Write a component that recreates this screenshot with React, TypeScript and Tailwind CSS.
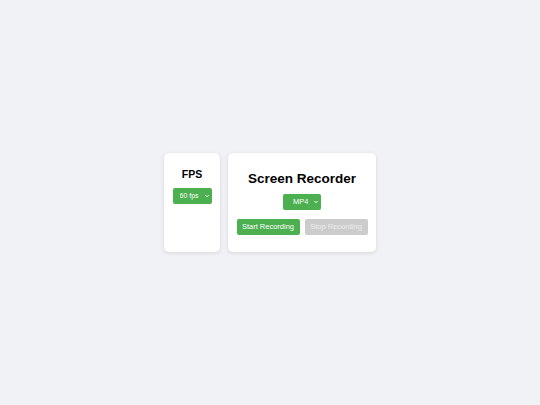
import { useState } from 'react';

function Chevron() {
  return (
    <svg
      className="pointer-events-none absolute right-[2px] top-[5px]"
      width="6"
      height="6"
      viewBox="0 0 12 12"
      fill="none"
      stroke="currentColor"
      strokeWidth="2"
      strokeLinecap="round"
      strokeLinejoin="round"
    >
      <polyline points="3,4.5 6,7.5 9,4.5" />
    </svg>
  );
}

export default function App() {
  const [fps, setFps] = useState('60');
  const [format, setFormat] = useState('mp4');
  const [recording, setRecording] = useState(false);

  return (
    <div
      className="flex min-h-screen items-center justify-center bg-[#f0f2f5]"
      style={{ fontFamily: '"Liberation Sans", Arial, sans-serif' }}
    >
      <div className="flex items-stretch gap-[8px]">
        {/* FPS card */}
        <div className="flex w-[56px] flex-col items-center rounded-[5px] bg-white pt-[15px] pb-[14px] shadow-[0_1px_4px_rgba(0,0,0,0.12)]">
          <h3 className="text-[10.5px] leading-[12px] font-bold text-black">FPS</h3>
          <div className="relative mt-[8px] flex text-white">
            <select
              value={fps}
              onChange={(e) => setFps(e.target.value)}
              className="block h-[16px] w-[39px] appearance-none rounded-[2px] bg-[#4caf50] pl-[7px] text-[7px] leading-[16px] text-white outline-none"
            >
              <option value="30">30 fps</option>
              <option value="60">60 fps</option>
            </select>
            <Chevron />
          </div>
        </div>

        {/* Recorder card */}
        <div className="flex h-[99px] w-[148px] flex-col items-center justify-center rounded-[5px] bg-white px-[9px] shadow-[0_1px_4px_rgba(0,0,0,0.12)]">
          <h2 className="text-[13.5px] leading-[16px] font-bold text-black">Screen Recorder</h2>
          <div className="relative mt-[7px] flex text-white">
            <select
              value={format}
              onChange={(e) => setFormat(e.target.value)}
              className="block h-[16px] w-[38px] appearance-none rounded-[2px] bg-[#4caf50] pl-[10px] text-[7.5px] leading-[16px] text-white outline-none"
            >
              <option value="mp4">MP4</option>
              <option value="webm">WEBM</option>
            </select>
            <Chevron />
          </div>
          <div className="mt-[9px] flex gap-[5px]">
            <button
              onClick={() => setRecording(true)}
              disabled={recording}
              className="h-[16px] w-[63px] rounded-[2px] bg-[#4caf50] text-[7.5px] text-white"
            >
              Start Recording
            </button>
            <button
              onClick={() => setRecording(false)}
              disabled={!recording}
              className="h-[16px] w-[63px] rounded-[2px] bg-[#cccccc] text-[7.5px] text-[#ececec]"
            >
              Stop Recording
            </button>
          </div>
        </div>
      </div>
    </div>
  );
}
